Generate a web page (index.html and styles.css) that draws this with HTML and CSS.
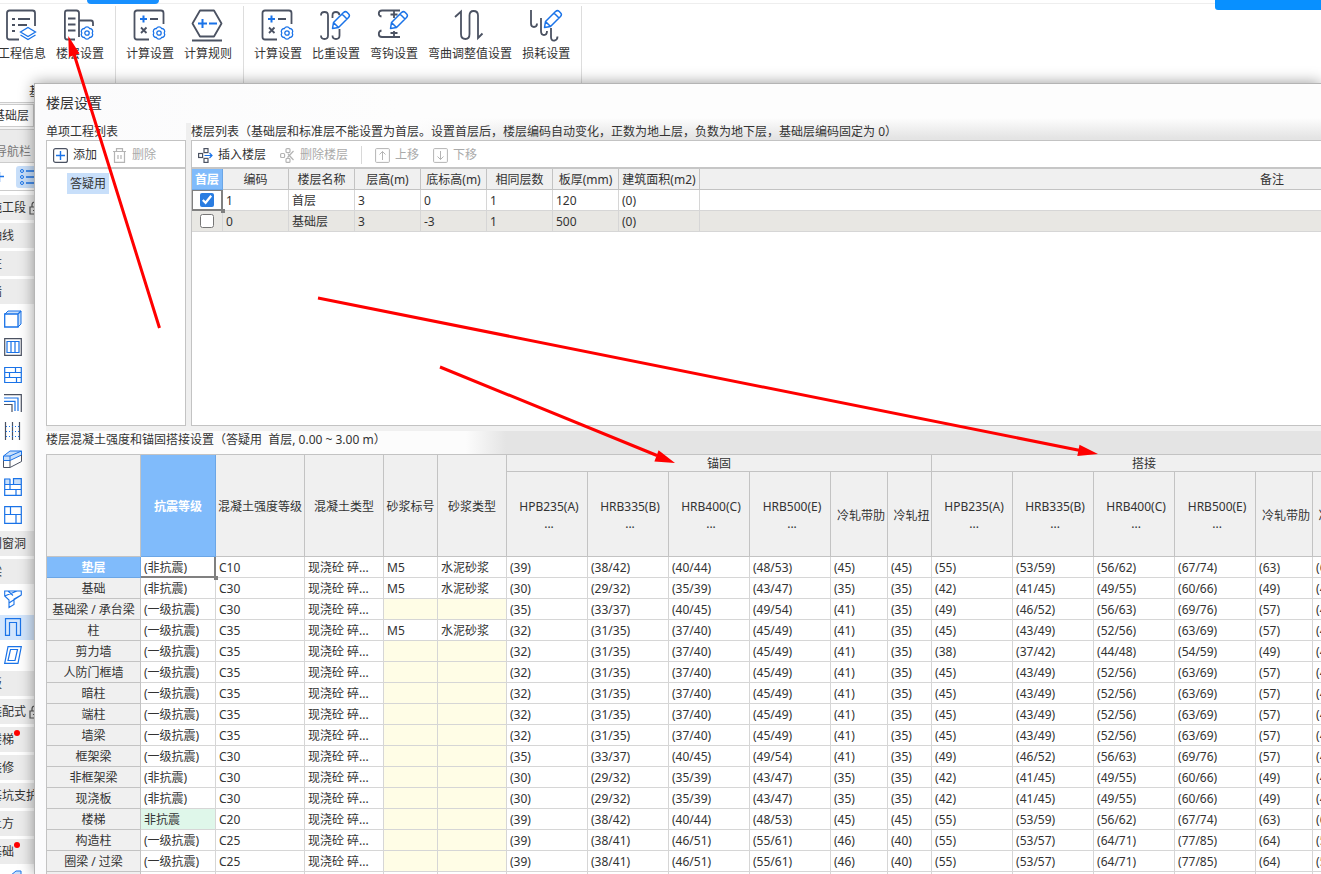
FILE: index.html
```html
<!DOCTYPE html>
<html lang="zh-CN">
<head>
<meta charset="utf-8">
<title>楼层设置</title>
<link rel="stylesheet" href="styles.css">
</head>
<body>
<svg class="defs" aria-hidden="true">
  <symbol id="gear" viewBox="0 0 14 14"><path d="M12.2 7A2.9 2.9 0 0 1 9.6 11.5A2.9 2.9 0 0 1 4.4 11.5A2.9 2.9 0 0 1 1.8 7A2.9 2.9 0 0 1 4.4 2.5A2.9 2.9 0 0 1 9.6 2.5A2.9 2.9 0 0 1 12.2 7Z" fill="#fff" stroke="#1a73e8" stroke-width="1.3"/><circle cx="7" cy="7" r="2.2" fill="none" stroke="#1a73e8" stroke-width="1.3"/></symbol>
  <symbol id="pencil" viewBox="0 0 20 20"><path d="M1.500 18.500L2.500 12.500L12.500 2.500Q14.500 .8 16 2.300L17.700 4Q19.200 5.500 17.500 7.500L7.500 17.500ZM11 4L16 9M2.500 12.500L7.500 17.500" fill="#fff" stroke="#1a73e8" stroke-width="1.5" stroke-linejoin="round"/></symbol>
  <symbol id="calc" viewBox="0 0 34 32"><path d="M16 30.500H4Q1.500 30.500 1.500 28V4Q1.500 1.500 4 1.500H28Q30.500 1.500 30.500 4V15" fill="none" stroke="#4b5262" stroke-width="1.800"/><path d="M7 10H14M10.500 6.500V13.500" stroke="#1a73e8" stroke-width="2"/><path d="M17 10H25M8 18.500L13.500 24M13.500 18.500L8 24" stroke="#4b5262" stroke-width="1.800"/><use href="#gear" x="19" y="17" width="14" height="14"/></symbol>
  <symbol id="lock" viewBox="0 0 12 14"><path d="M1 6H11V13H1ZM3 6V4Q3 1 6 1Q9 1 9 3M4 9.500H8" fill="none" stroke="#555" stroke-width="1.200"/></symbol>
</svg>

<div class="app">
  <div class="tabstrip"><span class="tab-active"></span><span class="account"></span></div>
  <nav class="ribbon" aria-label="工具栏">
    <div class="group first">
      <button class="tool"><svg viewBox="0 0 32 32"><path d="M13 30.500H3.500Q1 30.500 1 28V4Q1 1.500 3.500 1.500H26.500Q29 1.500 29 4V17" fill="none" stroke="#4b5262" stroke-width="1.800"/><path d="M6 10H9M12 10H24M6 16H9M12 16H21M6 22H9" stroke="#4b5262" stroke-width="1.800"/><path d="M22 18.500L29.500 23L22 27.500L14.500 23ZM14.500 26L22 30.500L29.500 26" fill="#fff" stroke="#1a73e8" stroke-width="1.300"/></svg>工程信息</button>
      <button class="tool"><svg viewBox="0 0 32 32"><path d="M15 28V4Q15 1.500 12.500 1.500H3Q.9 1.500 .9 4V28Q.9 30.500 3 30.500H11M15 11.500H27Q29 11.500 29 14V17M4 9.500H11.500M4 15.500H11.500M4 21.500H11.500" fill="none" stroke="#4b5262" stroke-width="1.800"/><use href="#gear" x="16" y="17" width="14" height="14"/></svg>楼层设置</button>
    </div>
    <div class="group">
      <button class="tool"><svg viewBox="0 0 32 32"><use href="#calc" x="-1" width="34" height="32"/></svg>计算设置</button>
      <button class="tool"><svg viewBox="1 0 32 32"><path d="M9 1.500H23L30.500 14.500L23 27.500H9L1.500 14.500ZM1 31.500H31" fill="none" stroke="#4b5262" stroke-width="1.800" stroke-linejoin="round"/><path d="M7 14.500H16M11.500 10V19M18 14.500H26" stroke="#1a73e8" stroke-width="2"/></svg>计算规则</button>
    </div>
    <div class="group">
      <button class="tool"><svg viewBox="0 0 32 32"><use href="#calc" x="-1" width="34" height="32"/></svg>计算设置</button>
      <button class="tool"><svg viewBox="0 0 32 32"><path d="M1 6.500Q1 3 4.500 3Q8 3 8 6.500V26.500Q8 30 4.500 30Q1 30 1 26.500M12.500 9V6.500Q12.500 3 16 3Q19 3 19.500 6M19.500 20V26.500Q19.500 30 16 30Q12.500 30 12.500 26.500" fill="none" stroke="#4b5262" stroke-width="1.800"/><use href="#pencil" x="11" y="1" width="20" height="20"/></svg>比重设置</button>
      <button class="tool"><svg viewBox="0 0 32 32"><path d="M3.500 7.500Q.8 7 .8 4.500Q.8 1.500 4 1.500H22M16 1.500V9M12.500 5.500H19.500M3.500 21.500Q.8 22 .8 25Q.8 28 4 28H22M16 28V22M12.500 24H19.500" fill="none" stroke="#4b5262" stroke-width="1.800"/><use href="#pencil" x="11" y="1" width="20" height="20"/></svg>弯钩设置</button>
      <button class="tool"><svg viewBox="0 0 32 32"><path d="M1 8L7 2.500V25Q7 30 11.500 30Q15.500 30 15.500 25V6.500Q15.500 2 19.500 2Q24 2 24 6.500V29L28.500 24.500" fill="none" stroke="#4b5262" stroke-width="1.800"/></svg>弯曲调整值设置</button>
      <button class="tool"><svg viewBox="0 0 32 32"><path d="M1 1V14.500Q1 18 4 18Q7 18 7 14.500M11 9V22Q11 26 14 26Q17 26 17 22M21 19V28Q21 32 24.500 31.500Q27.500 31 27.500 27.500" fill="none" stroke="#4b5262" stroke-width="1.800"/><use href="#pencil" x="13" y="0" width="20" height="20"/></svg>损耗设置</button>
    </div>
  </nav>
  <div class="group-name">基</div>
  <div class="combo-row"><div class="combo">基础层</div></div>
  <aside class="sidebar">
    <div class="nav-title">导航栏</div>
    <div class="nav-tools"><svg class="plus" viewBox="0 0 10 10"><path d="M0 4.500H10M5.500 0V10" stroke="#1a73e8" stroke-width="1.400"/></svg><span class="list-btn"><svg viewBox="0 0 20 16"><path d="M6 2H20M6 8H20M6 14H20" stroke="#1a73e8" stroke-width="1.300"/><g fill="none" stroke="#1a73e8"><circle cx="2" cy="2" r="1.500"/><circle cx="2" cy="8" r="1.500"/><circle cx="2" cy="14" r="1.500"/></g></svg></span></div>
    <div class="nav-list">
      <div class="cat">施工段<svg class="lock"><use href="#lock"/></svg></div>
      <div class="cat">轴线</div>
      <div class="cat">柱</div>
      <div class="cat">墙</div>
      <div class="kind"><svg viewBox="0 0 18 18"><path d="M1 4L4 1H17V14L14 17" fill="#c8dffa" stroke="#1a73e8"/><path d="M.7 4H14V17H.7ZM14 4L17 1" fill="#fff" stroke="#1a73e8" stroke-width="1.300"/></svg></div>
      <div class="kind"><svg viewBox="0 0 18 18"><path d="M.7.7H17.300V17.300H.7Z" fill="none" stroke="#4b5262" stroke-width="1.200"/><path d="M3 3.500H15V14.500H3ZM7 3V15M11 3V15" fill="none" stroke="#1a73e8" stroke-width="1.200"/></svg></div>
      <div class="kind"><svg viewBox="0 0 18 18"><path d="M.7 1.500H17.300V16.500H.7ZM1 6.500H17M1 11.500H17M11.500 2V6.500M5.500 6.500V11.500M12.500 11.500V16" fill="none" stroke="#1a73e8" stroke-width="1.200"/></svg></div>
      <div class="kind"><svg viewBox="0 0 18 18"><path d="M0 .7H17.300V18M0 10.500H8V18" fill="none" stroke="#4b5262" stroke-width="1.200"/><path d="M0 4H14V17M0 7.300H11V17" fill="none" stroke="#1a73e8" stroke-width="1.200"/></svg></div>
      <div class="kind"><svg viewBox="0 0 18 18"><path d="M1.500 0V18M8.500 0V18M15.500 0V18" stroke="#4b5262" stroke-width="1.200"/><path d="M2 4.500H16M2 9.500H16M2 14.500H16" stroke="#1a73e8" stroke-dasharray="1 2"/></svg></div>
      <div class="kind"><svg viewBox="0 0 18 18"><path d="M-.5 6L6 1H17.500V5L6 10.500H-.5Z" fill="#c8dffa" stroke="#1a73e8"/><path d="M-.5 6H6L17.500 1M6 6V10" fill="none" stroke="#1a73e8"/><path d="M-.5 10.500V17.500H6L17.500 11.500V5M6 10.500V17" fill="none" stroke="#4b5262"/></svg></div>
      <div class="kind"><svg viewBox="0 0 18 18"><path d="M.7.7H6V6H.7ZM9.500.7H17.300V6H9.500Z" fill="#c8dffa"/><path d="M6 1H.7V17.300H17.300V.7H9.500V6M6 .7V11M1 6.500H17M1 11.500H17M12 11.500V17" fill="none" stroke="#1a73e8" stroke-width="1.200"/></svg></div>
      <div class="kind"><svg viewBox="0 0 18 18"><path d="M.7.7H17.300V17.300H.7ZM1 8.500H17M6.500 1V8.500M12 8.500V17" fill="none" stroke="#1a73e8" stroke-width="1.200"/></svg></div>
      <div class="cat">门窗洞</div>
      <div class="cat">梁</div>
      <div class="kind"><svg viewBox="0 0 18 18"><path d="M.7 1H17.300V5L10 9V14.500L5 17.500V10L.7 6ZM.7 6L13 1M4 1L9 5.500M5 13L17.300 5" fill="none" stroke="#1a73e8" stroke-width="1.100"/></svg></div>
      <div class="kind selected"><svg viewBox="0 0 18 18"><path d="M1.500 17.300V.7H16.500V17.300H12.500V4.500H5.500V17.300Z" fill="none" stroke="#1a73e8" stroke-width="1.200"/></svg></div>
      <div class="kind"><svg viewBox="0 0 18 18"><path d="M4 .7H17.300L14 17.300H.7ZM6.500 3.500H13.500L11 14.500H4Z" fill="none" stroke="#1a73e8" stroke-width="1.200"/></svg></div>
      <div class="cat">板</div>
      <div class="cat">装配式<svg class="lock"><use href="#lock"/></svg></div>
      <div class="cat">楼梯<i class="dot"></i></div>
      <div class="cat">装修</div>
      <div class="cat">基坑支护</div>
      <div class="cat">土方</div>
      <div class="cat">基础<i class="dot"></i></div>
      <div class="kind"><svg viewBox="0 0 18 18"><path d="M1 10L12 1H17V8L6 17H1Z" fill="#c8dffa" stroke="#1a73e8"/></svg></div>
    </div>
  </aside>
</div>

<main class="dialog">
  <h1 class="dialog-title">楼层设置</h1>
  <div class="panes">
    <section class="pane project">
      <h2 class="caption">单项工程列表</h2>
      <div class="panel">
        <div class="toolbar">
          <button class="cmd"><svg viewBox="0 0 15 15"><rect x=".6" y=".6" width="13.800" height="13.800" rx="2" fill="none" stroke="#4b5262" stroke-width="1.200"/><path d="M3 7.500H12M7.500 3V12" stroke="#1a73e8" stroke-width="1.400"/></svg>添加</button>
          <button class="cmd" disabled><svg viewBox="0 0 15 15"><path d="M1 3.500H14M4.500 3V.7H10.500V3M2.500 4V14.300H12.500V4M6 7V11M9 7V11" fill="none" stroke="#b4b4b4" stroke-width="1.200"/></svg>删除</button>
        </div>
        <div class="tree"><span class="tree-item">答疑用</span></div>
      </div>
    </section>
    <section class="pane floors">
      <h2 class="caption">楼层列表（基础层和标准层不能设置为首层。设置首层后，楼层编码自动变化，正数为地上层，负数为地下层，基础层编码固定为 0）</h2>
      <div class="panel">
        <div class="toolbar">
          <button class="cmd"><svg viewBox="0 0 15 15"><g fill="none" stroke="#4b5262" stroke-width="1.200"><rect x=".6" y="5.500" width="4" height="4"/><rect x="6" y=".6" width="4" height="4"/><rect x="6" y="10.400" width="4" height="4"/></g><path d="M6.500 7.500H14M11.500 5L14 7.500L11.500 10" fill="none" stroke="#1a73e8" stroke-width="1.200"/></svg>插入楼层</button>
          <button class="cmd" disabled><svg viewBox="0 0 15 15"><g fill="none" stroke="#b4b4b4" stroke-width="1.200"><rect x=".6" y="5.500" width="4" height="4" rx="1"/><rect x="6" y=".6" width="4" height="4" rx="1"/><rect x="6" y="10.400" width="4" height="4" rx="1"/><path d="M8 6L13.500 12M13.500 3L7.500 9.500"/></g></svg>删除楼层</button>
          <span class="sep"></span>
          <button class="cmd" disabled><svg viewBox="0 0 15 15"><rect x=".6" y=".6" width="13.800" height="13.800" rx="1" fill="none" stroke="#b4b4b4"/><path d="M7.500 12V3.500M4.500 6.500L7.500 3.500L10.500 6.500" fill="none" stroke="#b4b4b4"/></svg>上移</button>
          <button class="cmd" disabled><svg viewBox="0 0 15 15"><rect x=".6" y=".6" width="13.800" height="13.800" rx="1" fill="none" stroke="#b4b4b4"/><path d="M7.500 3V11.500M4.500 8.500L7.500 11.500L10.500 8.500" fill="none" stroke="#b4b4b4"/></svg>下移</button>
        </div>
        <table class="grid floor-grid">
          <colgroup><col class="w31"><col class="w66"><col class="w66"><col class="w66"><col class="w66"><col class="w66"><col class="w66"><col class="w81"><col class="w-remark"></colgroup>
          <thead><tr><th class="on">首层</th><th>编码</th><th>楼层名称</th><th>层高(m)</th><th>底标高(m)</th><th>相同层数</th><th>板厚(mm)</th><th>建筑面积(m2)</th><th>备注</th></tr></thead>
          <tbody>
            <tr><td class="check current"><input type="checkbox" aria-label="首层" checked></td><td>1</td><td>首层</td><td>3</td><td>0</td><td>1</td><td>120</td><td>(0)</td><td></td></tr>
            <tr class="alt"><td class="check"><input type="checkbox" aria-label="基础层"></td><td>0</td><td>基础层</td><td>3</td><td>-3</td><td>1</td><td>500</td><td>(0)</td><td></td></tr>
          </tbody>
        </table>
      </div>
    </section>
  </div>
  <div class="splitter"></div>
  <h2 class="caption strength-caption">楼层混凝土强度和锚固搭接设置（答疑用&nbsp; 首层, 0.00 ~ 3.00 m）</h2>
  <div class="strength">
    <table class="grid strength-grid">
      <colgroup><col class="w94"><col class="w75"><col class="w89"><col class="w79"><col class="w54"><col class="w69"><col class="w81"><col class="w81"><col class="w81"><col class="w81"><col class="w57"><col class="w44"><col class="w81"><col class="w81"><col class="w81"><col class="w81"><col class="w57"><col class="w44"></colgroup>
      <thead>
        <tr class="top"><th rowspan="2"></th><th rowspan="2" class="on">抗震等级</th><th rowspan="2">混凝土强度等级</th><th rowspan="2">混凝土类型</th><th rowspan="2">砂浆标号</th><th rowspan="2">砂浆类型</th><th colspan="6">锚固</th><th colspan="6">搭接</th></tr>
        <tr class="sub"><th>HPB235(A)<br>...</th><th>HRB335(B)<br>...</th><th>HRB400(C)<br>...</th><th>HRB500(E)<br>...</th><th>冷轧带肋</th><th>冷轧扭</th><th>HPB235(A)<br>...</th><th>HRB335(B)<br>...</th><th>HRB400(C)<br>...</th><th>HRB500(E)<br>...</th><th>冷轧带肋</th><th>冷轧扭</th></tr>
      </thead>
      <tbody>
        <tr><th class="on">垫层</th><td class="current">(非抗震)</td><td>C10</td><td>现浇砼 碎...</td><td>M5</td><td>水泥砂浆</td><td>(39)</td><td>(38/42)</td><td>(40/44)</td><td>(48/53)</td><td>(45)</td><td>(45)</td><td>(55)</td><td>(53/59)</td><td>(56/62)</td><td>(67/74)</td><td>(63)</td><td>(63)</td></tr>
        <tr><th>基础</th><td>(非抗震)</td><td>C30</td><td>现浇砼 碎...</td><td>M5</td><td>水泥砂浆</td><td>(30)</td><td>(29/32)</td><td>(35/39)</td><td>(43/47)</td><td>(35)</td><td>(35)</td><td>(42)</td><td>(41/45)</td><td>(49/55)</td><td>(60/66)</td><td>(49)</td><td>(49)</td></tr>
        <tr><th>基础梁 / 承台梁</th><td>(一级抗震)</td><td>C30</td><td>现浇砼 碎...</td><td class="na"></td><td class="na"></td><td>(35)</td><td>(33/37)</td><td>(40/45)</td><td>(49/54)</td><td>(41)</td><td>(35)</td><td>(49)</td><td>(46/52)</td><td>(56/63)</td><td>(69/76)</td><td>(57)</td><td>(49)</td></tr>
        <tr><th>柱</th><td>(一级抗震)</td><td>C35</td><td>现浇砼 碎...</td><td>M5</td><td>水泥砂浆</td><td>(32)</td><td>(31/35)</td><td>(37/40)</td><td>(45/49)</td><td>(41)</td><td>(35)</td><td>(45)</td><td>(43/49)</td><td>(52/56)</td><td>(63/69)</td><td>(57)</td><td>(49)</td></tr>
        <tr><th>剪力墙</th><td>(一级抗震)</td><td>C35</td><td>现浇砼 碎...</td><td class="na"></td><td class="na"></td><td>(32)</td><td>(31/35)</td><td>(37/40)</td><td>(45/49)</td><td>(41)</td><td>(35)</td><td>(38)</td><td>(37/42)</td><td>(44/48)</td><td>(54/59)</td><td>(49)</td><td>(42)</td></tr>
        <tr><th>人防门框墙</th><td>(一级抗震)</td><td>C35</td><td>现浇砼 碎...</td><td class="na"></td><td class="na"></td><td>(32)</td><td>(31/35)</td><td>(37/40)</td><td>(45/49)</td><td>(41)</td><td>(35)</td><td>(45)</td><td>(43/49)</td><td>(52/56)</td><td>(63/69)</td><td>(57)</td><td>(49)</td></tr>
        <tr><th>暗柱</th><td>(一级抗震)</td><td>C35</td><td>现浇砼 碎...</td><td class="na"></td><td class="na"></td><td>(32)</td><td>(31/35)</td><td>(37/40)</td><td>(45/49)</td><td>(41)</td><td>(35)</td><td>(45)</td><td>(43/49)</td><td>(52/56)</td><td>(63/69)</td><td>(57)</td><td>(49)</td></tr>
        <tr><th>端柱</th><td>(一级抗震)</td><td>C35</td><td>现浇砼 碎...</td><td class="na"></td><td class="na"></td><td>(32)</td><td>(31/35)</td><td>(37/40)</td><td>(45/49)</td><td>(41)</td><td>(35)</td><td>(45)</td><td>(43/49)</td><td>(52/56)</td><td>(63/69)</td><td>(57)</td><td>(49)</td></tr>
        <tr><th>墙梁</th><td>(一级抗震)</td><td>C35</td><td>现浇砼 碎...</td><td class="na"></td><td class="na"></td><td>(32)</td><td>(31/35)</td><td>(37/40)</td><td>(45/49)</td><td>(41)</td><td>(35)</td><td>(45)</td><td>(43/49)</td><td>(52/56)</td><td>(63/69)</td><td>(57)</td><td>(49)</td></tr>
        <tr><th>框架梁</th><td>(一级抗震)</td><td>C30</td><td>现浇砼 碎...</td><td class="na"></td><td class="na"></td><td>(35)</td><td>(33/37)</td><td>(40/45)</td><td>(49/54)</td><td>(41)</td><td>(35)</td><td>(49)</td><td>(46/52)</td><td>(56/63)</td><td>(69/76)</td><td>(57)</td><td>(49)</td></tr>
        <tr><th>非框架梁</th><td>(非抗震)</td><td>C30</td><td>现浇砼 碎...</td><td class="na"></td><td class="na"></td><td>(30)</td><td>(29/32)</td><td>(35/39)</td><td>(43/47)</td><td>(35)</td><td>(35)</td><td>(42)</td><td>(41/45)</td><td>(49/55)</td><td>(60/66)</td><td>(49)</td><td>(49)</td></tr>
        <tr><th>现浇板</th><td>(非抗震)</td><td>C30</td><td>现浇砼 碎...</td><td class="na"></td><td class="na"></td><td>(30)</td><td>(29/32)</td><td>(35/39)</td><td>(43/47)</td><td>(35)</td><td>(35)</td><td>(42)</td><td>(41/45)</td><td>(49/55)</td><td>(60/66)</td><td>(49)</td><td>(49)</td></tr>
        <tr><th>楼梯</th><td class="edited">非抗震</td><td>C20</td><td>现浇砼 碎...</td><td class="na"></td><td class="na"></td><td>(39)</td><td>(38/42)</td><td>(40/44)</td><td>(48/53)</td><td>(45)</td><td>(45)</td><td>(55)</td><td>(53/59)</td><td>(56/62)</td><td>(67/74)</td><td>(63)</td><td>(63)</td></tr>
        <tr><th>构造柱</th><td>(一级抗震)</td><td>C25</td><td>现浇砼 碎...</td><td class="na"></td><td class="na"></td><td>(39)</td><td>(38/41)</td><td>(46/51)</td><td>(55/61)</td><td>(46)</td><td>(40)</td><td>(55)</td><td>(53/57)</td><td>(64/71)</td><td>(77/85)</td><td>(64)</td><td>(56)</td></tr>
        <tr><th>圈梁 / 过梁</th><td>(一级抗震)</td><td>C25</td><td>现浇砼 碎...</td><td class="na"></td><td class="na"></td><td>(39)</td><td>(38/41)</td><td>(46/51)</td><td>(55/61)</td><td>(46)</td><td>(40)</td><td>(55)</td><td>(53/57)</td><td>(64/71)</td><td>(77/85)</td><td>(64)</td><td>(56)</td></tr>
        <tr><th></th><td></td><td></td><td></td><td></td><td></td><td></td><td></td><td></td><td></td><td></td><td></td><td></td><td></td><td></td><td></td><td></td><td></td></tr>
      </tbody>
    </table>
  </div>
</main>

<svg class="arrows" aria-hidden="true">
  <g stroke="#f00" stroke-width="3"><path d="M159.500 328L74 54M440 367L657 455.500M318 298L1079 450.200"/></g>
  <g fill="#f00"><path d="M68.300 36L79.500 53.500L68.900 57ZM675 463L654.400 461.500L658.600 450.300ZM1098 454L1077.300 456L1079.500 444.700Z"/></g>
</svg>
</body>
</html>
```
FILE: styles.css
```css
* { box-sizing: border-box; }

body {
  margin: 0;
  height: 100vh;
  position: relative;
  overflow: hidden;
  background: #fff;
  color: #333;
  font: 12px/16px "Noto Sans", "Noto Sans CJK SC", sans-serif;
}

button {
  border: 0;
  padding: 0;
  background: none;
  color: inherit;
  font: inherit;
}

h1, h2 { margin: 0; font-weight: 400; }
svg { display: block; flex: none; overflow: visible; }
.defs { position: absolute; width: 0; height: 0; overflow: hidden; }

/* Main window, scrolled slightly past its left edge */
.app { margin-left: -20px; }

.tabstrip {
  display: flex;
  justify-content: space-between;
  height: 4px;
  padding-left: 107px;
  border-bottom: 1px solid #eee;
}
.tab-active { width: 72px; height: 4px; border-radius: 0 0 6px 6px; background: #1890ff; }
.account { width: 106px; height: 10px; border-radius: 0 0 0 3px; background: #0890ff; }

.ribbon { display: flex; height: 80px; padding-top: 2px; }
.group {
  display: flex;
  align-items: flex-start;
  gap: 10px;
  padding: 3px 11px 0 10px;
  border-right: 1px solid #ddd;
}
.group.first { padding-left: 18px; }
.tool { display: flex; flex-direction: column; align-items: center; gap: 5px; white-space: nowrap; }
.tool svg { width: 32px; height: 32px; }

.group-name { height: 19px; padding-left: 49px; border-bottom: 1px solid #ccc; }
.combo-row { padding: 1px 0 2px; background: #f4f4f4; }
.combo {
  width: 54px;
  height: 23px;
  padding-left: 12px;
  border: 1px solid #ccc;
  background: #fff;
  line-height: 22px;
}

.sidebar { width: 56px; }
.nav-title {
  height: 34px;
  padding-left: 15px;
  border-top: 1px solid #ccc;
  border-bottom: 1px solid #ccc;
  background: #ebebeb;
  color: #777;
  line-height: 44px;
}
.nav-tools {
  display: flex;
  align-items: center;
  gap: 12px;
  height: 28px;
  padding-left: 14px;
  border-bottom: 1px solid #ccc;
}
.plus { width: 10px; height: 10px; }
.list-btn { width: 24px; height: 22px; padding: 3px 0 0 4px; border-radius: 3px; background: #c8dffa; }
.list-btn svg { width: 20px; height: 16px; }

.nav-list { display: flex; flex-direction: column; gap: 3px; padding-top: 4px; }
.cat {
  display: flex;
  gap: 3px;
  height: 25px;
  padding-left: 10px;
  background: #ececec;
  line-height: 25px;
  white-space: nowrap;
}
.lock { width: 12px; height: 14px; margin-top: 6px; }
.dot { width: 6px; height: 6px; margin-top: 3px; margin-left: -3px; border-radius: 3px; background: #f00; }
.kind { height: 25px; padding: 3px 0 0 24px; }
.kind svg { width: 18px; height: 18px; }
.kind.selected { background: #d3e6fd; }

/* Floating dialog */
.dialog {
  position: absolute;
  inset: 83px 0 0 34px;
  overflow: hidden;
  padding-left: 11px;
  border: solid #b4b4b4;
  border-width: 1px 0 0 1px;
  background:
    linear-gradient(90deg, #fbfbfc, #fdfdfd 370px, rgba(253, 253, 253, 0) 490px),
    linear-gradient(#fdfdfd, #fdfdfd 34px, #e4e4e4 54px);
  box-shadow: 0 0 14px rgba(0, 0, 0, .4);
}
.dialog-title { font-size: 14px; line-height: 38px; padding-bottom: 1px; }
.caption { font-size: 12px; line-height: 17px; white-space: nowrap; }

.panes { display: flex; min-height: 303px; }
.pane { display: flex; flex-direction: column; }
.project { flex: none; width: 140px; }
.floors { flex: 1; min-width: 0; border-left: 5px solid #efefef; }
.panel { flex: 1; overflow: hidden; border: 1px solid #c3c3c3; background: #fff; }
.floors .panel { border-right: 0; }

.toolbar {
  display: flex;
  align-items: center;
  gap: 14px;
  height: 28px;
  padding: 2px 0 0 6px;
  border-bottom: 2px solid #c6c6c6;
}
.project .toolbar { gap: 15px; }
.cmd { display: flex; align-items: center; gap: 5px; white-space: nowrap; }
.cmd svg { width: 15px; height: 15px; }
.cmd:disabled { color: #aaa; }
.sep { width: 1px; height: 18px; margin: 0 -1px; background: #d8d8d8; }

.tree { padding: 4px 0 0 20px; }
.tree-item { display: inline-block; padding: 0 3px; background: #c8dffa; line-height: 21px; }

.grid { width: max-content; table-layout: fixed; border-spacing: 0; }
.grid th, .grid td {
  height: 21px;
  padding: 2px 3px 0;
  border: solid #d6d6d6;
  border-width: 0 1px 1px 0;
  overflow: hidden;
  white-space: nowrap;
}
.grid th { padding: 2px 0 0; border-color: #c3c3c3; background: #f0f0f0; font-weight: 400; text-align: center; }
.grid td { background: #fff; text-align: left; }
.grid th.on { border-color: #6ba6e6; background: #80bbfb; color: #fff; font-weight: 700; }
.grid .alt td { background: #e8e7e3; }
.grid td.na { background: #fffde6; }
.grid td.edited { background: #dff7ea; }
.grid td.current {
  position: relative;
  overflow: visible;
  border: solid #808080;
  border-width: 0 2px 2px 0;
}
.grid td.check { padding: 0; text-align: center; }
.grid td.check.current { border-width: 1px 2px 2px 1px; }
.grid td.current::after {
  content: "";
  position: absolute;
  right: -4px;
  bottom: -4px;
  width: 4px;
  height: 4px;
  background: #808080;
}
.check input { display: block; width: 14px; height: 14px; margin: 0 auto; accent-color: #2a7de1; }

.floor-grid { width: 1653px; }
.w31 { width: 31px; }
.w44 { width: 44px; }
.w54 { width: 54px; }
.w57 { width: 57px; }
.w66 { width: 66px; }
.w69 { width: 69px; }
.w75 { width: 75px; }
.w79 { width: 79px; }
.w81 { width: 81px; }
.w89 { width: 89px; }
.w94 { width: 94px; }
.w-remark { width: 1145px; }

.splitter { height: 5px; background: #f0f0f0; }
.strength-caption {
  padding-bottom: 5px;
  background: linear-gradient(90deg, #fcfcfc 420px, #e4e4e4 460px);
  line-height: 18px;
}
.strength { border: solid #c3c3c3; border-width: 1px 0 0 1px; background: #fff; }
.strength-grid { width: 1310px; }
.grid .top th[colspan] { height: 17px; line-height: 14px; }
.grid .sub th { height: 85px; padding-left: 4px; line-height: 17px; }

/* Annotation arrows over the window */
.arrows { position: absolute; top: 0; left: 0; width: 100%; height: 100%; pointer-events: none; }
```
